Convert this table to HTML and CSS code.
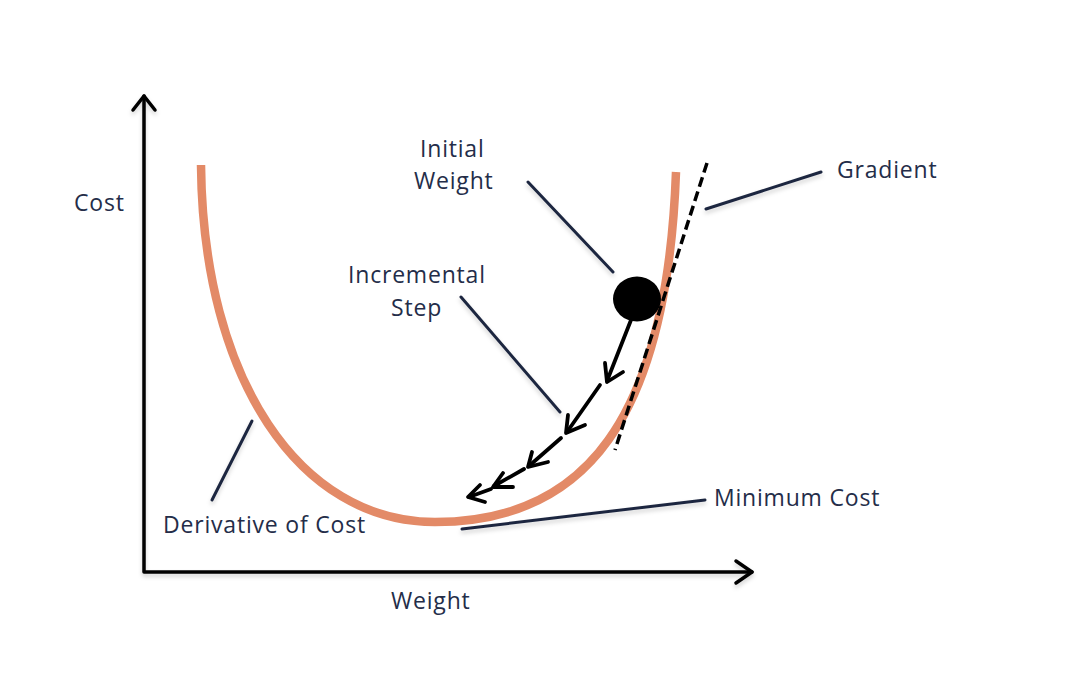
FILE: index.html
```html
<!DOCTYPE html>
<html lang="en">
<head>
<meta charset="utf-8">
<title>Gradient Descent</title>
<link rel="stylesheet" href="styles.css">
</head>
<body>
<main class="canvas">
  <svg class="diagram" width="1084" height="684" viewBox="0 0 1084 684" xmlns="http://www.w3.org/2000/svg">
    <defs>
      <filter id="soft" x="-10%" y="-10%" width="120%" height="130%">
        <feDropShadow dx="0" dy="3" stdDeviation="2" flood-color="#000" flood-opacity="0.18"/>
      </filter>
    </defs>

    <!-- axes -->
    <g class="axis" filter="url(#soft)">
      <polyline points="144,96 144,572 752,572"/>
      <polyline points="133,110 144,96 155,110"/>
      <polyline points="736,561 752,572 736,583"/>
    </g>

    <!-- cost curve -->
    <path class="curve" d="M201,165 C203,380 300,522 435,522 C585,522 667,420 676,172"/>

    <!-- tangent -->
    <line class="tangent" x1="707" y1="163" x2="615" y2="450"/>

    <!-- steps -->
    <g class="steps">
      <line x1="631" y1="320" x2="607" y2="381"/>
      <polyline points="605,363 607,382 623,372"/>
      <line x1="600" y1="385" x2="567" y2="432"/>
      <polyline points="568,415 566,433 585,425"/>
      <line x1="561" y1="438" x2="529" y2="466"/>
      <polyline points="532,452 528,467 548,462"/>
      <line x1="524" y1="469" x2="494" y2="486"/>
      <polyline points="503,473 493,487 513,487"/>
      <line x1="491" y1="489" x2="469" y2="497"/>
      <polyline points="480,485 468,497 485,502"/>
    </g>

    <!-- ball -->
    <ellipse class="ball" cx="637" cy="299" rx="24" ry="22.5"/>

    <!-- callout lines -->
    <g class="callout" filter="url(#soft)">
      <line x1="528" y1="182" x2="613" y2="272"/>
      <line x1="461" y1="297" x2="560" y2="412"/>
      <line x1="706" y1="209" x2="821" y2="172"/>
      <line x1="462" y1="529" x2="705" y2="500"/>
      <line x1="252" y1="421" x2="212" y2="500"/>
    </g>

    <!-- labels -->
    <text class="label" x="74" y="211">Cost</text>
    <text class="label" x="420" y="157">Initial</text>
    <text class="label" x="414" y="189">Weight</text>
    <text class="label" x="837" y="178">Gradient</text>
    <text class="label" x="348" y="283">Incremental</text>
    <text class="label" x="391" y="316">Step</text>
    <text class="label" x="714" y="506">Minimum Cost</text>
    <text class="label" x="163" y="533">Derivative of Cost</text>
    <text class="label" x="391" y="609">Weight</text>
  </svg>
</main>
</body>
</html>
```

FILE: styles.css
```css
html, body {
  margin: 0;
  padding: 0;
  background: #ffffff;
}

.canvas {
  width: 1084px;
  height: 684px;
  overflow: hidden;
}

.diagram {
  display: block;
}

.axis polyline {
  fill: none;
  stroke: #000000;
  stroke-width: 3.5;
  stroke-linecap: round;
  stroke-linejoin: round;
}

.curve {
  fill: none;
  stroke: #e38a67;
  stroke-width: 8.5;
  stroke-linecap: butt;
}

.tangent {
  stroke: #000000;
  stroke-width: 3.5;
  stroke-dasharray: 10 5;
}

.steps line,
.steps polyline {
  fill: none;
  stroke: #000000;
  stroke-width: 3.8;
  stroke-linecap: round;
  stroke-linejoin: round;
}

.ball {
  fill: #000000;
}

.callout line {
  stroke: #1f2841;
  stroke-width: 3;
  stroke-linecap: round;
}

.label {
  font-family: "Open Sans", "DejaVu Sans", sans-serif;
  font-size: 23px;
  letter-spacing: 0.8px;
  fill: #242d49;
}
```
